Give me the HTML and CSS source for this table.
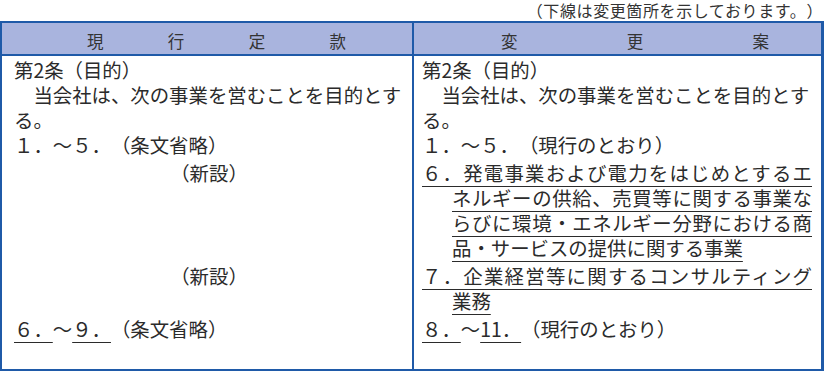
FILE: index.html
```html
<!DOCTYPE html>
<html lang="ja">
<head>
<meta charset="utf-8">
<link rel="stylesheet" href="styles.css">
</head>
<body>
<div class="caption">（下線は変更箇所を示しております。）</div>
<div class="sheet">
  <div class="head head-left"><span>現</span><span>行</span><span>定</span><span>款</span></div>
  <div class="head head-right"><span>変</span><span>更</span><span>案</span></div>

  <div class="cell cell-left first">
    <p>第2条（目的）</p>
    <p>　当会社は、次の事業を営むことを目的とする。</p>
    <p>１．～５．（条文省略）</p>
  </div>
  <div class="cell cell-right first">
    <p>第2条（目的）</p>
    <p>　当会社は、次の事業を営むことを目的とする。</p>
    <p>１．～５．（現行のとおり）</p>
  </div>

  <div class="cell cell-left">
    <p class="center">（新設）</p>
  </div>
  <div class="cell cell-right">
    <p class="item">
      <span class="line">６．発電事業および電力をはじめとするエ</span>
      <span class="line cont">ネルギーの供給、売買等に関する事業な</span>
      <span class="line cont">らびに環境・エネルギー分野における商</span>
      <span class="line cont last">品・サービスの提供に関する事業</span>
    </p>
  </div>

  <div class="cell cell-left">
    <p class="center">（新設）</p>
  </div>
  <div class="cell cell-right">
    <p class="item">
      <span class="line">７．企業経営等に関するコンサルティング</span>
      <span class="line cont last">業務</span>
    </p>
  </div>

  <div class="cell cell-left">
    <p><span class="ul">６．</span>～<span class="ul">９．</span>（条文省略）</p>
  </div>
  <div class="cell cell-right">
    <p><span class="ul">８．</span>～<span class="ul">11．</span>（現行のとおり）</p>
  </div>

  <div class="cell cell-left fill"></div>
  <div class="cell cell-right fill"></div>
</div>
</body>
</html>
```

FILE: styles.css
```css
* {
  box-sizing: border-box;
}

html, body {
  margin: 0;
  padding: 0;
  background: #ffffff;
}

body {
  width: 825px;
  height: 371px;
  overflow: hidden;
  font-family: "Noto Sans CJK JP", "Noto Sans", sans-serif;
  color: #2b2b2b;
  text-spacing-trim: space-all;
}

.caption {
  height: 21px;
  line-height: 21px;
  font-size: 16px;
  letter-spacing: 0.6px;
  text-align: right;
  padding-right: 2px;
  color: #333333;
}

.sheet {
  width: 824px;
  height: 350px;
  display: grid;
  grid-template-columns: 410px 409px;
  grid-template-rows: 33px auto auto auto auto 1fr;
  border: 2px solid #1f5aa8;
  border-right-width: 3px;
}

.head {
  background: #a9b4de;
  border-bottom: 2px solid #1f5aa8;
  display: flex;
  align-items: center;
  justify-content: space-between;
  font-size: 16.5px;
  color: #333333;
  padding-top: 4px;
}

.head-left {
  padding-left: 85px;
  padding-right: 66px;
}

.head-right {
  border-left: 2px solid #1f5aa8;
  padding-left: 87px;
  padding-right: 52px;
}

.cell {
  font-size: 19.4px;
  line-height: 25px;
  padding-top: 3px;
}

.cell.first {
  padding-top: 1px;
}

.cell.fill {
  padding-top: 0;
}

.cell-left {
  padding-left: 12px;
  padding-right: 8px;
}

.cell-right {
  border-left: 2px solid #1f5aa8;
  padding-left: 8px;
  padding-right: 9px;
}

.cell p {
  margin: 0;
}

.center {
  text-align: center;
}

.line {
  display: block;
  text-align: justify;
  text-align-last: justify;
  text-decoration: underline;
  text-decoration-thickness: 1px;
  text-underline-offset: 5px;
}

.line.cont {
  margin-left: 30px;
}

.line.last {
  text-align-last: left;
}

.ul {
  text-decoration: underline;
  text-decoration-thickness: 1px;
  text-underline-offset: 5px;
}
```
